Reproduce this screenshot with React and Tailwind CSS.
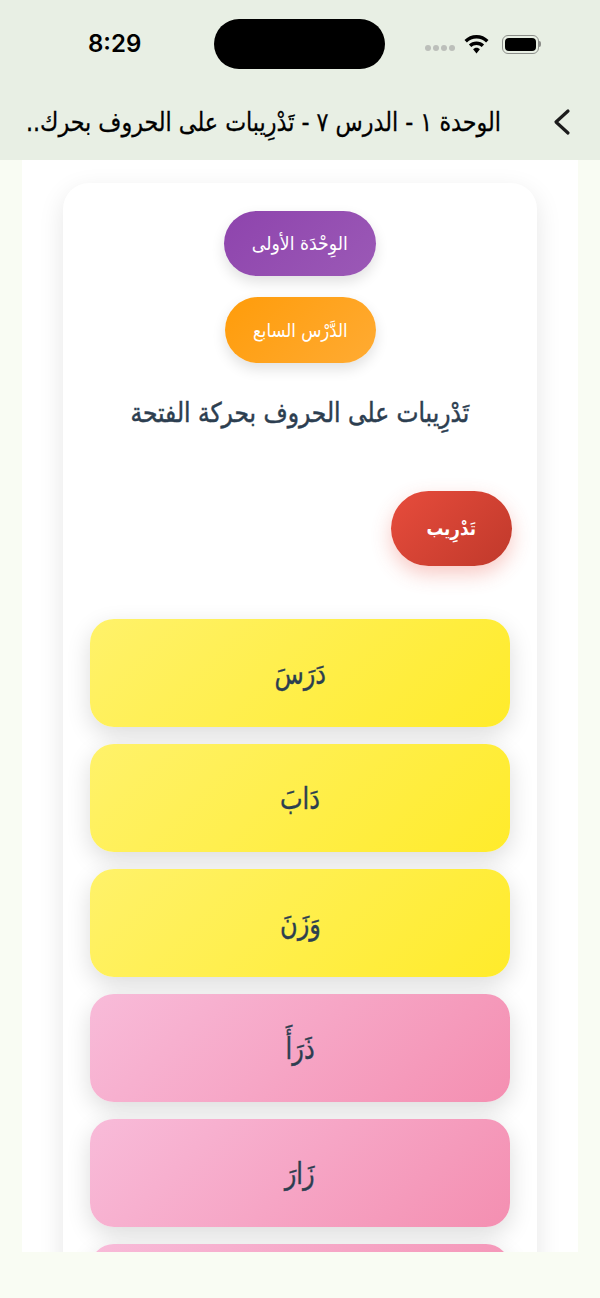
const YELLOW = 'bg-[linear-gradient(135deg,#fff26a,#ffeb2b)]'
const PINK = 'bg-[linear-gradient(135deg,#f8bbd9,#f48fb1)]'

const WORDS = [
  { text: 'دَرَسَ', tone: YELLOW },
  { text: 'دَابَ', tone: YELLOW },
  { text: 'وَزَنَ', tone: YELLOW },
  { text: 'ذَرَأَ', tone: PINK },
  { text: 'زَارَ', tone: PINK },
  { text: '', tone: PINK },
]

function Wifi() {
  return (
    <svg width="25" height="19" viewBox="0 0 25 19" fill="#000">
      <path d="M12.5 0C7.8 0 3.6 1.9.5 5l2.4 2.5C5.4 5 8.8 3.5 12.5 3.5S19.6 5 22.1 7.5L24.5 5C21.4 1.9 17.2 0 12.5 0z" />
      <path d="M12.5 6.4c-3 0-5.7 1.2-7.6 3.2l2.4 2.5c1.3-1.4 3.2-2.2 5.2-2.2s3.9.8 5.2 2.2l2.4-2.5c-1.9-2-4.6-3.2-7.6-3.2z" />
      <path d="M12.5 12.7c-1.4 0-2.6.6-3.4 1.5l3.4 4.3 3.4-4.3c-.8-.9-2-1.5-3.4-1.5z" />
    </svg>
  )
}

function StatusBar() {
  return (
    <div className="flex items-start h-[69px] pt-[19px]">
      <span className="w-[214px] pl-[88px] pt-[8px] text-[24px] leading-[34px] font-semibold text-black font-['Inter',sans-serif]">8:29</span>
      <div className="w-[171px] h-[50px] rounded-full bg-black" />
      <div className="flex items-center h-[50px] pl-[40px]">
        <div className="flex gap-[2px] mt-[8px]">
          {[0, 1, 2, 3].map(i => <span key={i} className="w-[6px] h-[6px] rounded-full bg-[#bcbfba]" />)}
        </div>
        <div className="ml-[9px]"><Wifi /></div>
        <div className="ml-[13px] flex items-center">
          <div className="w-[37px] h-[19px] rounded-[6px] border-[1.5px] border-[#8c8e8a] p-[2px]">
            <div className="w-full h-full rounded-[4px] bg-black" />
          </div>
          <div className="w-[2px] h-[6px] rounded-r bg-[#8c8e8a]" />
        </div>
      </div>
    </div>
  )
}

// The installed Arabic face runs wider than the naskh used on the device, so labels get narrowed
function Pill({ className, textClass, children }) {
  return (
    <div className={`flex items-center justify-center rounded-full text-white ${className}`}>
      <span dir="rtl" className={`whitespace-nowrap ${textClass}`}>{children}</span>
    </div>
  )
}

export default function App() {
  return (
    <div dir="ltr" className="h-[1298px] overflow-hidden bg-[#f9fcf3] font-['DejaVu_Sans',serif]">
      <header className="h-[160px] bg-[#e8efe4]">
        <StatusBar />
        <div className="flex items-center justify-between h-[91px] pt-[15px] pl-[26px] pr-[28px]">
          <div className="flex justify-center w-[475px]">
            <h1 dir="rtl" className="shrink-0 scale-x-[0.856] text-[26px] leading-[40px] text-black whitespace-nowrap [-webkit-text-stroke:0.3px_#000]">الوحدة ١ - الدرس ٧ - تَدْرِيبات على الحروف بحرك..</h1>
          </div>
          <svg width="20" height="28" viewBox="0 0 20 28" fill="none" stroke="#1c1c1c" strokeWidth="3.2" strokeLinecap="round" strokeLinejoin="round">
            <path d="M16 3 4 14l12 11" />
          </svg>
        </div>
      </header>

      <main className="mx-[22px] h-[1092px] overflow-hidden bg-white pt-[23px] px-[41px]">
        <section className="rounded-[26px] bg-white shadow-[0_8px_26px_rgba(0,0,0,0.1)] pt-[28px] px-[27px] pb-10">
          <div className="flex flex-col items-center">
            <Pill textClass="scale-x-[0.91]" className="w-[152px] h-[65px] text-[19px] bg-[linear-gradient(135deg,#8e44ad,#9b59b6)] shadow-[0_6px_14px_rgba(0,0,0,0.12)]">الوِحْدَة الأولى</Pill>
            <Pill textClass="scale-x-[0.87]" className="mt-[21px] w-[151px] h-[66px] text-[19px] bg-[linear-gradient(135deg,#ff9c0a,#ffab33)] shadow-[0_6px_14px_rgba(0,0,0,0.12)]">الدَّرْس السابع</Pill>
            <div className="mt-[21px] flex justify-center w-[340px]">
              <h2 dir="rtl" className="shrink-0 scale-x-[0.865] text-[27px] leading-[58px] font-medium text-[#2c3e50] whitespace-nowrap [-webkit-text-stroke:0.5px_#2c3e50]">تَدْرِيبات على الحروف بحركة الفتحة</h2>
            </div>
          </div>

          <div className="flex justify-end mt-[49px] -mr-[2px]">
            <Pill textClass="scale-x-[0.88]" className="w-[121px] h-[75px] text-[19px] font-semibold bg-[linear-gradient(135deg,#e74c3c,#c0392b)] shadow-[0_8px_20px_rgba(231,76,60,0.3)]">تَدْرِيب</Pill>
          </div>

          <div className="mt-[53px] flex flex-col gap-[17px]">
            {WORDS.map((word, i) => (
              <div
                key={i}
                dir="rtl"
                className={`flex items-center justify-center h-[108px] rounded-[24px] text-[30px] text-[#2c3e50] shadow-[0_8px_24px_rgba(0,0,0,0.14)] ${word.tone}`}
              >
                <span className="scale-x-[0.8] [-webkit-text-stroke:0.4px_#2c3e50]">{word.text}</span>
              </div>
            ))}
          </div>
        </section>
      </main>
    </div>
  )
}
